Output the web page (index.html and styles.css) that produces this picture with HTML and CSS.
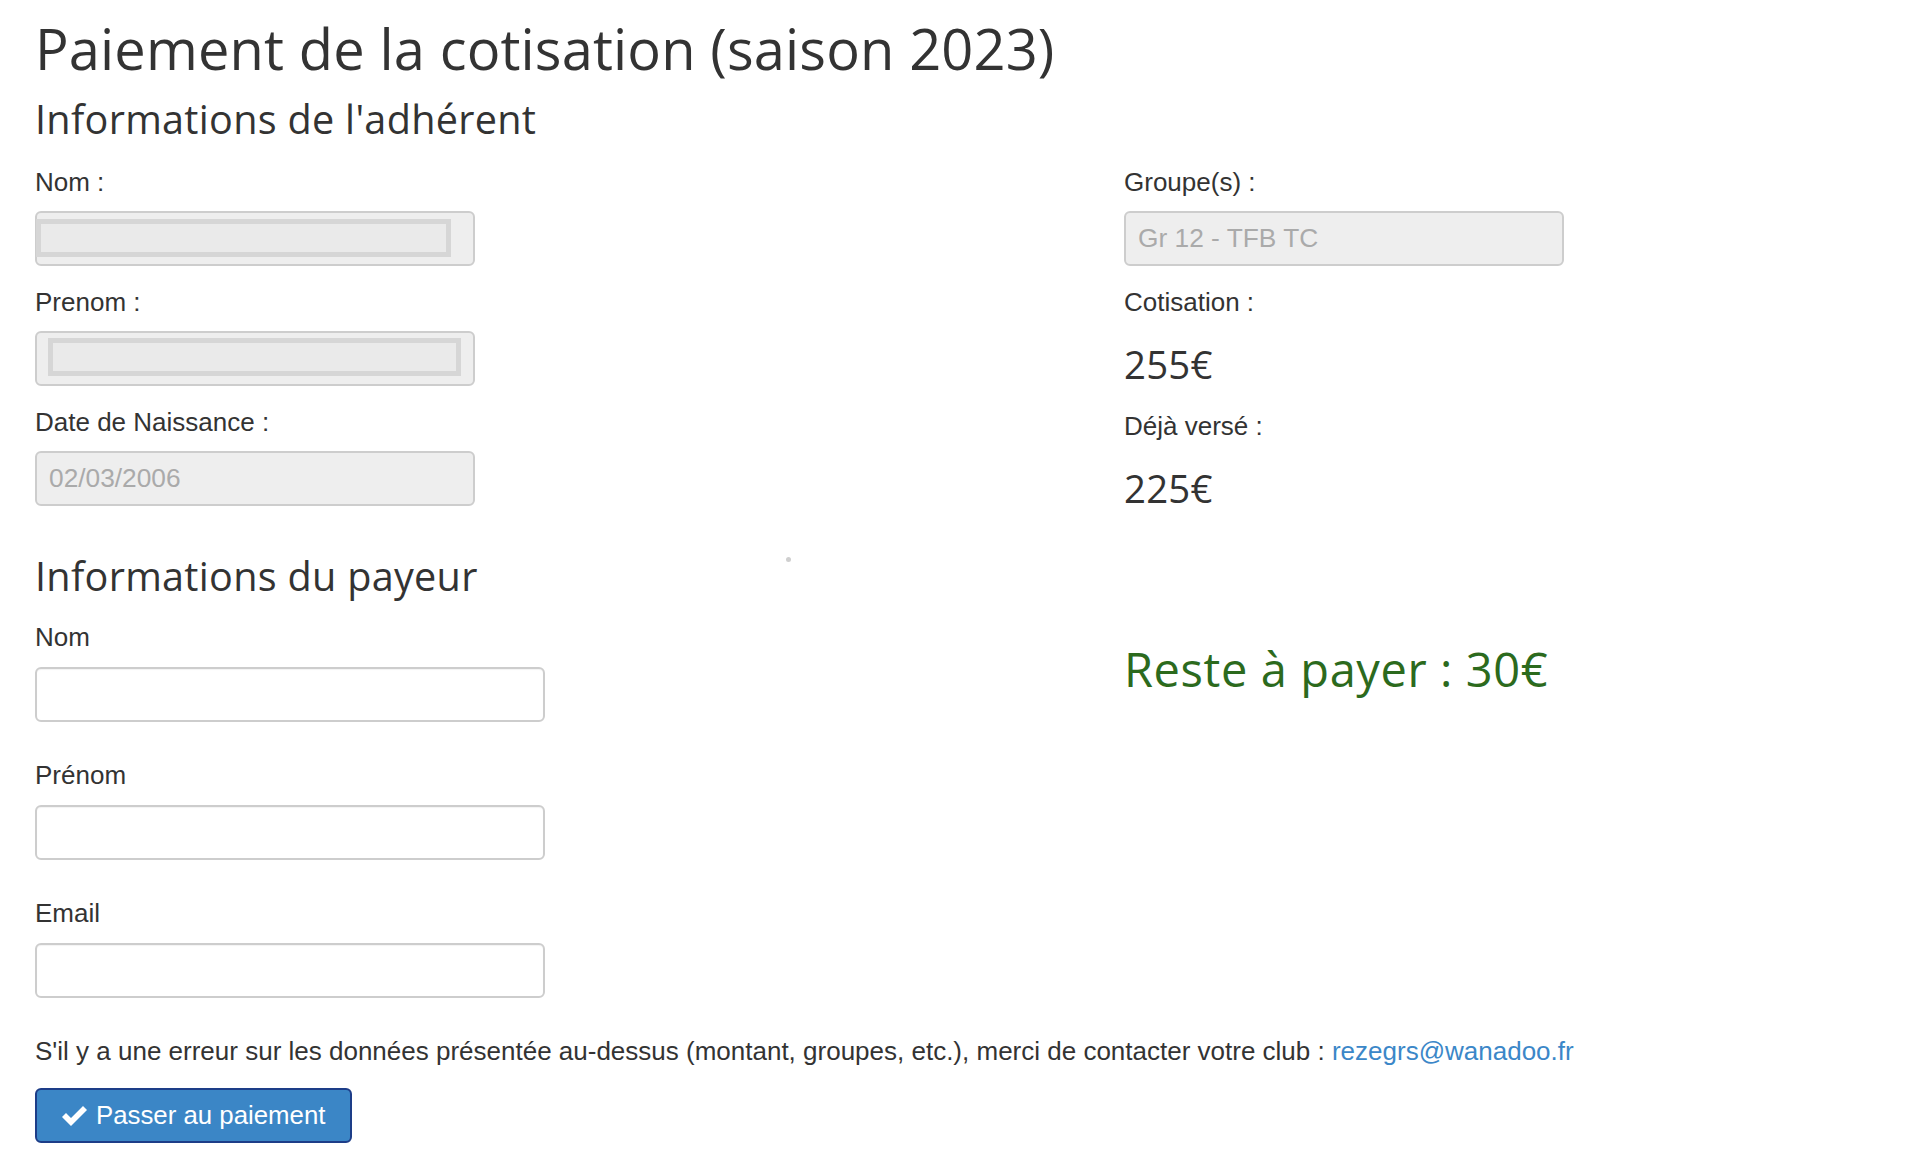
FILE: index.html
```html
<!DOCTYPE html>
<html lang="fr">
<head>
<meta charset="utf-8">
<title>Paiement de la cotisation</title>
<link rel="stylesheet" href="styles.css">
</head>
<body>
<div class="page">
  <h1 class="title">Paiement de la cotisation (saison 2023)</h1>
  <h3 class="section-title adherent">Informations de l'adhérent</h3>

  <div class="row identity">
    <div class="col">
      <div class="field">
        <label class="label">Nom :</label>
        <div class="box disabled"><span class="redact redact-nom"></span></div>
      </div>
      <div class="field">
        <label class="label">Prenom :</label>
        <div class="box disabled"><span class="redact redact-prenom"></span></div>
      </div>
      <div class="field">
        <label class="label">Date de Naissance :</label>
        <div class="box disabled"><span class="value">02/03/2006</span></div>
      </div>
    </div>
    <div class="col">
      <div class="field">
        <label class="label">Groupe(s) :</label>
        <div class="box disabled"><span class="value">Gr 12 - TFB TC</span></div>
      </div>
      <label class="label">Cotisation :</label>
      <div class="amount">255€</div>
      <label class="label">Déjà versé :</label>
      <div class="amount last">225€</div>
    </div>
  </div>

  <div class="row payer">
    <div class="col">
      <h3 class="section-title">Informations du payeur</h3>
      <div class="pay-field first">
        <label class="label pay-label" for="p-nom">Nom</label>
        <input class="box input" id="p-nom" type="text">
      </div>
      <div class="pay-field">
        <label class="label pay-label" for="p-prenom">Prénom</label>
        <input class="box input" id="p-prenom" type="text">
      </div>
      <div class="pay-field">
        <label class="label pay-label" for="p-email">Email</label>
        <input class="box input" id="p-email" type="email">
      </div>
    </div>
    <div class="col">
      <h2 class="remaining">Reste à payer : 30€</h2>
    </div>
  </div>

  <p class="notice">S'il y a une erreur sur les données présentée au-dessus (montant, groupes, etc.), merci de contacter votre club : <a href="#" class="mail">rezegrs@wanadoo.fr</a></p>

  <button class="btn-pay" type="button">
    <svg class="check" width="25" height="20" viewBox="0 0 25 20" aria-hidden="true"><path d="M0 11 L4 7 L9 12 L21 0 L25 4 L9 20 Z" fill="#fff"/></svg>
    <span>Passer au paiement</span>
  </button>

  <span class="dot"></span>
</div>
</body>
</html>
```

FILE: styles.css
```css
* {
  box-sizing: border-box;
}

html,
body {
  margin: 0;
  padding: 0;
  background: #fff;
}

body {
  font-family: "Liberation Sans", Arial, sans-serif;
  font-size: 26px;
  color: #333;
}

.page {
  position: relative;
  padding: 17px 0 0 35px;
  min-height: 1168px;
}

.title {
  font-family: "Open Sans", "Liberation Sans", sans-serif;
  font-weight: 400;
  font-size: 56px;
  line-height: 62px;
  letter-spacing: 0.14px;
  margin: 0;
}

.section-title {
  font-family: "Open Sans", "Liberation Sans", sans-serif;
  font-weight: 400;
  font-size: 39.6px;
  line-height: 44px;
  letter-spacing: 0.3px;
  margin: 0;
}

.section-title.adherent {
  margin-top: 18px;
}

.row {
  display: grid;
  grid-template-columns: 1089px 1fr;
  align-items: start;
}

.row.identity {
  margin-top: 25.5px;
}

.row.payer {
  margin-top: 44px;
}

.field {
  margin-bottom: 21px;
}

.col > .field:last-child {
  margin-bottom: 0;
}

.label {
  display: block;
  line-height: 30px;
  margin-bottom: 14px;
  font-weight: 400;
}

.box {
  display: block;
  width: 439.5px;
  height: 55px;
  border: 2px solid #cdcdcd;
  border-radius: 6px;
  padding: 0 12px;
  background: #fff;
  font-family: "Liberation Sans", Arial, sans-serif;
  font-size: 26px;
  color: #555;
}

.box.disabled {
  background: #eeeeee;
  display: flex;
  align-items: center;
  padding: 0 12px;
}

.box .value {
  color: #aaaaaa;
  font-size: 26.3px;
}

.redact {
  display: block;
  align-self: flex-start;
  height: 37.5px;
  border: 5px solid #d6d6d6;
  background: #eaeaea;
}

.redact-nom {
  width: 415px;
  margin-left: -13px;
  margin-top: 6.8px;
}

.redact-prenom {
  width: 414.5px;
  margin-left: -1px;
  margin-top: 5.7px;
}

.amount {
  font-family: "Open Sans", "Liberation Sans", sans-serif;
  font-size: 38.4px;
  line-height: 44px;
  letter-spacing: 0.2px;
  margin: 25px 0 25px;
}

.amount.last {
  margin-bottom: 0;
}

.input {
  width: 510px;
  outline: none;
  box-shadow: inset 0 1px 1px rgba(0, 0, 0, 0.05);
}

.pay-field {
  margin-top: 38px;
}

.pay-field.first {
  margin-top: 24.5px;
}

.pay-label {
  margin-bottom: 15px;
}

.remaining {
  font-family: "Open Sans", "Liberation Sans", sans-serif;
  font-weight: 400;
  font-size: 47px;
  line-height: 54px;
  letter-spacing: 0.6px;
  color: #2c6a1d;
  margin: 88px 0 0;
}

.notice {
  margin: 38px 0 0;
  line-height: 30px;
}

.mail {
  color: #3b87c8;
  text-decoration: none;
}

.btn-pay {
  display: inline-flex;
  align-items: center;
  gap: 9px;
  margin-top: 22px;
  height: 55px;
  padding: 0 25px 0 25px;
  border: 2px solid #1d3d88;
  border-radius: 6px;
  background: #3b86c6;
  color: #fff;
  font-family: "Liberation Sans", Arial, sans-serif;
  font-size: 25.8px;
  cursor: pointer;
}

.check {
  display: block;
  flex: none;
}

.dot {
  position: absolute;
  left: 786px;
  top: 557px;
  width: 5px;
  height: 5px;
  border-radius: 50%;
  background: #cfcfcf;
}
```
